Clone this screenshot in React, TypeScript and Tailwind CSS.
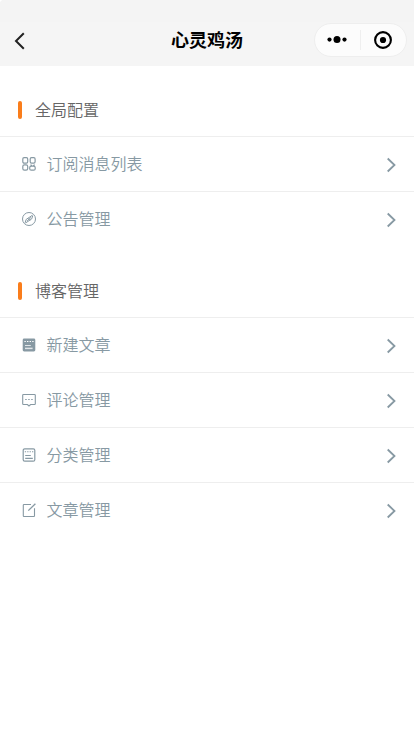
import type { ReactNode } from "react";

interface MenuItem {
  label: string;
  icon: ReactNode;
}

interface MenuSectionProps {
  title: string;
  items: MenuItem[];
}

const iconProps = {
  width: 14,
  height: 14,
  viewBox: "0 0 14 14",
  fill: "none",
  stroke: "currentColor",
  className: "shrink-0",
};

const AppsIcon = () => (
  <svg {...iconProps} strokeWidth="1.2">
    <rect x="0.8" y="0.7" width="4.9" height="5.4" rx="1.3" />
    <rect x="8.2" y="0.7" width="4.9" height="5.4" rx="1.3" />
    <rect x="0.8" y="7.9" width="4.9" height="5.3" rx="1.6" />
    <rect x="7.7" y="9.2" width="5.5" height="4" rx="1.5" />
    <path d="M8.6 7.6l1.3 1.4M12.6 7.6l-1.3 1.4" />
  </svg>
);

const NoticeIcon = () => (
  <svg {...iconProps}>
    <circle cx="7" cy="7" r="6.5" />
    <path d="M3.2 10.4l1-3 6-4 .5.5-1 3-6 4zM5.2 8.8l3.8-3.4M6 6.3l2 2.1" />
  </svg>
);

const NewArticleIcon = () => (
  <svg {...iconProps}>
    <rect x="0.7" y="0.5" width="12.6" height="13" rx="1.4" fill="currentColor" stroke="none" />
    <path d="M2.4 3.5h1.4M5 3.5h1.4M7.6 3.5H9M10.2 3.5h1.4" stroke="#fff" strokeWidth="1.1" />
    <path d="M3 7.5h5.8" stroke="#fff" strokeOpacity="0.75" />
    <path d="M3 10.4h7.6" stroke="#fff" strokeOpacity="0.75" strokeWidth="1.5" />
  </svg>
);

const CommentIcon = () => (
  <svg {...iconProps}>
    <path d="M1.5 1.5h11a.8.8 0 0 1 .8.8v8.4a.8.8 0 0 1-.8.8H8.6L7 13l-1.6-1.5H1.5a.8.8 0 0 1-.8-.8V2.3a.8.8 0 0 1 .8-.8z" strokeWidth="1.1" />
    <path d="M3.2 6.5h1.5M6.2 6.5h1.5M9.2 6.5h1.5" strokeWidth="1.2" />
  </svg>
);

const CategoryIcon = () => (
  <svg {...iconProps}>
    <rect x="1.2" y="0.8" width="11.6" height="12.4" rx="1.5" strokeWidth="1.2" />
    <path d="M2.8 3.7h1.3M5.2 3.7h1.3M7.6 3.7h1.3M10 3.7h1.3" strokeWidth="1.1" />
    <path d="M3.2 7.5h5.6M3.2 10.4h7.6" strokeWidth="1.2" />
  </svg>
);

const EditIcon = () => (
  <svg {...iconProps}>
    <path d="M9 1.5H2a.7.7 0 0 0-.7.7v10.6c0 .4.3.7.7.7h9.8c.4 0 .7-.3.7-.7V5.2" strokeWidth="1.1" />
    <path d="M6.3 7.6L13.4.7" strokeWidth="1.3" />
  </svg>
);

const sections: MenuSectionProps[] = [
  {
    title: "全局配置",
    items: [
      { label: "订阅消息列表", icon: <AppsIcon /> },
      { label: "公告管理", icon: <NoticeIcon /> },
    ],
  },
  {
    title: "博客管理",
    items: [
      { label: "新建文章", icon: <NewArticleIcon /> },
      { label: "评论管理", icon: <CommentIcon /> },
      { label: "分类管理", icon: <CategoryIcon /> },
      { label: "文章管理", icon: <EditIcon /> },
    ],
  },
];

const NavBar = () => (
  <header className="h-[66px] rounded-tl bg-[#f5f5f5]">
    <div className="h-[22px] rounded-tl bg-[#f4f4f4]" />
    <div className="grid h-9 grid-cols-[1fr_auto_1fr] items-center">
      <button className="pt-0.5 pl-[14px]" aria-label="返回">
        <svg width="12" height="18" viewBox="0 0 12 18" fill="none" stroke="#222" strokeWidth="2">
          <path d="M9.8 1.3L2 9l7.8 7.7" />
        </svg>
      </button>
      <h1 className="pb-0.5 text-lg leading-none font-bold text-black">心灵鸡汤</h1>
      <div className="mr-[7px] flex h-[34px] w-[93px] items-center justify-self-end rounded-full border border-[#eeeeee] bg-[#fcfcfc]">
        <button className="flex w-[45px] justify-center pr-0.5" aria-label="更多">
          <svg width="20" height="8" viewBox="0 0 20 8">
            <circle cx="2.5" cy="3.6" r="2.1" />
            <circle cx="10" cy="3.6" r="3.5" />
            <circle cx="17.5" cy="3.6" r="2.1" />
          </svg>
        </button>
        <span className="h-5 w-px bg-[#efefef]" />
        <button className="flex flex-1 justify-center pr-[2px]" aria-label="关闭">
          <svg width="18" height="18" viewBox="0 0 18 18">
            <circle cx="9" cy="9" r="7.9" fill="none" stroke="#000" strokeWidth="2.1" />
            <circle cx="9" cy="9" r="3.1" />
          </svg>
        </button>
      </div>
    </div>
  </header>
);

const MenuSection = ({ title, items }: MenuSectionProps) => (
  <section className="pb-px">
    <div className="flex h-[70px] items-center pt-[18px] pl-[17.5px]">
      <span className="h-[18px] w-[4.5px] rounded-sm bg-[#fa7d1b]" />
      <h2 className="ml-[13px] pb-0.5 text-base leading-none font-[350] text-[#666]">{title}</h2>
    </div>
    <ul>
      {items.map((item) => (
        <li
          key={item.label}
          className="flex h-[55px] items-center border-t border-[#eeeeee] pr-[17px] pl-[22px] text-[#8799a3]"
        >
          {item.icon}
          <span className="ml-[10.5px] flex-1 pb-0.5 text-base leading-none font-[350]">{item.label}</span>
          <svg width="11" height="16" viewBox="0 0 11 16" fill="none" stroke="currentColor" strokeWidth="1.8" className="mt-0.5">
            <path d="M1.7 1.5L8.5 8l-6.8 6.5" />
          </svg>
        </li>
      ))}
    </ul>
  </section>
);

const App = () => (
  <div className="min-h-screen bg-white font-['Noto_Sans_CJK_SC',sans-serif]">
    <NavBar />
    <main>
      {sections.map((section) => (
        <MenuSection key={section.title} {...section} />
      ))}
    </main>
  </div>
);

export default App;
